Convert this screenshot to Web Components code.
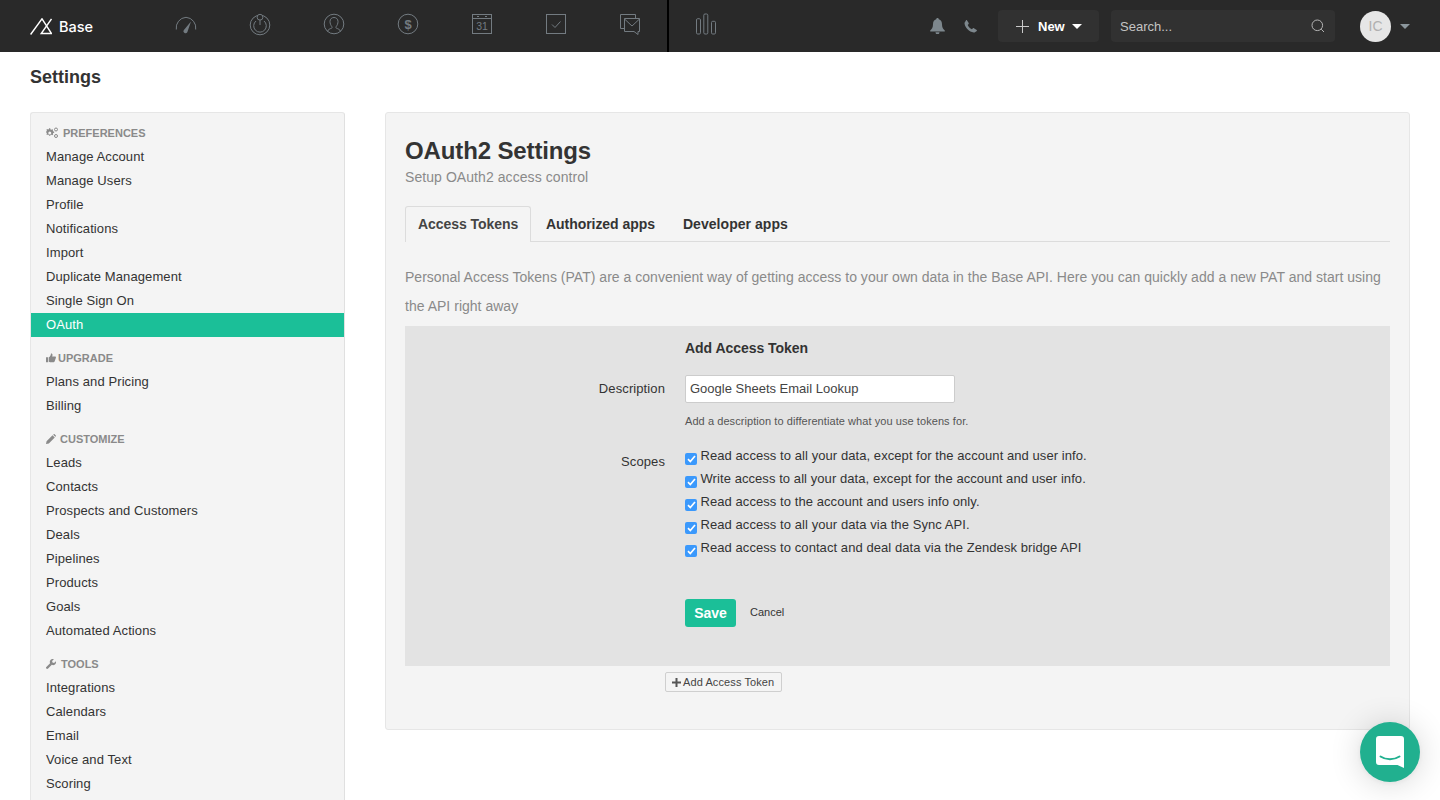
<!DOCTYPE html>
<html lang="en">
<head>
<meta charset="utf-8">
<title>Settings</title>
<style>
  html, body { margin: 0; height: 100%; overflow: hidden; background: #fff; }
  body { font-family: "Liberation Sans", Arial, sans-serif; color: #333; }
</style>
</head>
<body>
<app-shell>
  <top-bar slot="top"></top-bar>
  <side-nav slot="side">
    <nav-group label="Preferences" icon="gears">
      <nav-item>Manage Account</nav-item>
      <nav-item>Manage Users</nav-item>
      <nav-item>Profile</nav-item>
      <nav-item>Notifications</nav-item>
      <nav-item>Import</nav-item>
      <nav-item>Duplicate Management</nav-item>
      <nav-item>Single Sign On</nav-item>
      <nav-item active>OAuth</nav-item>
    </nav-group>
    <nav-group label="Upgrade" icon="thumb">
      <nav-item>Plans and Pricing</nav-item>
      <nav-item>Billing</nav-item>
    </nav-group>
    <nav-group label="Customize" icon="pencil">
      <nav-item>Leads</nav-item>
      <nav-item>Contacts</nav-item>
      <nav-item>Prospects and Customers</nav-item>
      <nav-item>Deals</nav-item>
      <nav-item>Pipelines</nav-item>
      <nav-item>Products</nav-item>
      <nav-item>Goals</nav-item>
      <nav-item>Automated Actions</nav-item>
    </nav-group>
    <nav-group label="Tools" icon="wrench">
      <nav-item>Integrations</nav-item>
      <nav-item>Calendars</nav-item>
      <nav-item>Email</nav-item>
      <nav-item>Voice and Text</nav-item>
      <nav-item>Scoring</nav-item>
    </nav-group>
  </side-nav>
  <oauth-panel>
    <token-form>
      <scope-check>Read access to all your data, except for the account and user info.</scope-check>
      <scope-check>Write access to all your data, except for the account and user info.</scope-check>
      <scope-check>Read access to the account and users info only.</scope-check>
      <scope-check>Read access to all your data via the Sync API.</scope-check>
      <scope-check>Read access to contact and deal data via the Zendesk bridge API</scope-check>
    </token-form>
  </oauth-panel>
</app-shell>
<chat-launcher></chat-launcher>

<script>
class AppShell extends HTMLElement {
  constructor() {
    super();
    this.attachShadow({ mode: 'open' });
    this.shadowRoot.innerHTML = `
      <style>
        :host { display: block; }
        h1 { margin: 0; padding: 0 30px; height: 60px; line-height: 50px; font-size: 18px; font-weight: 700; color: #333; }
        .cols { display: flex; align-items: flex-start; gap: 40px; padding: 0 30px; }
      </style>
      <slot name="top"></slot>
      <h1>Settings</h1>
      <div class="cols">
        <slot name="side"></slot>
        <slot></slot>
      </div>
    `;
  }
}
customElements.define('app-shell', AppShell);

const NAV_ICONS = {
  gauge: `<path d="M2.300 17.500A10.600 10.600 0 0 1 12 5.300 10.600 10.600 0 0 1 21.700 17.500"/><path d="M9.700 18.200 17 9.500l-3.700 10.700a1.900 1.900 0 0 1-3.600-2z" fill="currentColor" stroke="none"/>`,
  leads: `<circle cx="12" cy="13" r="9.800"/><path d="M8 9a6.300 6.300 0 1 0 8 0"/><circle cx="12" cy="5.200" r="2.900" fill="#292929"/><path d="M12 8.100V13"/>`,
  contact: `<circle cx="12" cy="12" r="9.800"/><path d="M5.500 19.500c.6-2.200 2.400-2.600 4.100-3.300.6-.3.7-1 .3-1.500C8.700 13.200 8 11.400 8 9.500 8 7 9.800 5.500 12 5.500S16 7 16 9.500c0 1.900-.7 3.700-1.900 5.200-.4.500-.3 1.200.3 1.500 1.700.7 3.500 1.100 4.100 3.300"/>`,
  dollar: `<circle cx="12" cy="12" r="9.800"/><text x="12" y="16.500" text-anchor="middle" font-size="13" font-weight="700" font-family="Liberation Sans, sans-serif" fill="currentColor" stroke="none">$</text>`,
  calendar: `<rect x="2.500" y="2.500" width="19" height="19"/><path d="M2.500 6.500h19"/><path d="M7 4.500h2M15 4.500h2"/><text x="12" y="18" text-anchor="middle" font-size="10.500" font-family="Liberation Sans, sans-serif" fill="currentColor" stroke="none">31</text>`,
  task: `<rect x="2.500" y="2.500" width="19" height="19"/><path d="M8 12.500l3 3 5.500-6"/>`,
  mail: `<path d="M6.500 16.500H2.500V2.500h15v4"/><path d="M6.500 6.500h15v13h-1.500v3l-4-3H6.500z" fill="#292929"/><path d="M6.500 7l7.500 7 7.500-7"/>`,
  chart: `<rect x="2.500" y="6.700" width="4" height="15.300" rx="1.200"/><rect x="9.800" y="2" width="4" height="20" rx="1.200"/><rect x="17.500" y="9.300" width="4" height="12.700" rx="1.200"/>`
};

class NavIcon extends HTMLElement {
  constructor() {
    super();
    this.attachShadow({ mode: 'open' });
  }
  connectedCallback() {
    this.shadowRoot.innerHTML = `
      <style>
        :host { display: flex; align-items: center; justify-content: center; box-sizing: border-box; width: 74px; height: 52px; padding-bottom: 4px; color: #737b81; }
        svg { display: block; width: 24px; height: 24px; }
      </style>
      <svg viewBox="0 0 24 24" fill="none" stroke="currentColor" stroke-width="1">${NAV_ICONS[this.getAttribute('name')]}</svg>
    `;
  }
}
customElements.define('nav-icon', NavIcon);

class TopBar extends HTMLElement {
  constructor() {
    super();
    this.attachShadow({ mode: 'open' });
    this.shadowRoot.innerHTML = `
      <style>
        :host { display: flex; align-items: center; height: 52px; background: #292929; color: #fff; }
        .logo { display: flex; align-items: center; gap: 7px; width: 119px; padding-left: 30px; font: 500 14.500px Inter, "Liberation Sans", sans-serif; }
        .logo svg { display: block; }
        .icons { display: flex; border-right: 2px solid #000; }
        .right { display: flex; align-items: center; margin-left: auto; padding-right: 30px; }
        .glyph { display: block; color: #7d878d; }
        .bell { margin-right: 19px; }
        .phone { margin-right: 21px; }
        .new { display: flex; align-items: center; box-sizing: border-box; width: 101px; height: 32px; padding-left: 18px; background: #313131; border-radius: 4px; font-size: 13px; font-weight: 700; margin-right: 12px; }
        .new svg { margin-right: 9px; }
        .new i, .caret { display: block; width: 0; height: 0; border-left: 5px solid transparent; border-right: 5px solid transparent; border-top: 5px solid #fff; margin-left: 7px; }
        .search { display: flex; align-items: center; justify-content: space-between; box-sizing: border-box; width: 224px; height: 32px; padding: 0 10px 0 9px; background: #313131; border-radius: 4px; font-size: 13px; color: #c4c4c4; margin-right: 25px; }
        .avatar { display: flex; align-items: center; justify-content: center; width: 31px; height: 31px; border-radius: 50%; background: #e6e6e6; color: #b0b0b0; font-size: 14px; }
        .caret { border-top-color: #8b969c; margin-left: 9px; }
      </style>
      <div class="logo">
        <svg width="22" height="17" viewBox="0 0 22 17" fill="none" stroke="#fff" stroke-width="1.400">
          <path d="M.6 16.500 12 .8 21.500 15.500H11.200L21.500 1"/>
        </svg>
        <span>Base</span>
      </div>
      <div class="icons">
        <nav-icon name="gauge"></nav-icon>
        <nav-icon name="leads"></nav-icon>
        <nav-icon name="contact"></nav-icon>
        <nav-icon name="dollar"></nav-icon>
        <nav-icon name="calendar"></nav-icon>
        <nav-icon name="task"></nav-icon>
        <nav-icon name="mail"></nav-icon>
      </div>
      <nav-icon name="chart"></nav-icon>
      <div class="right">
        <svg class="glyph bell" width="15" height="16" viewBox="0 0 15 16" fill="currentColor"><path d="M7.500 0C8.300 0 8.800.6 8.800 1.300 11 2 12 3.900 12 6.200c0 3 1 4.800 2.800 6.300v1H.2v-1C2 11 3 9.200 3 6.200 3 3.900 4 2 6.200 1.300 6.200.6 6.700 0 7.500 0zM5.500 14.300h4a2 2 0 0 1-4 0z"/></svg>
        <svg class="glyph phone" width="13" height="13" viewBox="0 0 13 13" fill="currentColor"><path d="M2.900.2 4.700 3c.2.300.1.700-.1 1L3.700 5c.7 1.700 2.300 3.300 4.200 4.200l1-.9c.3-.2.700-.3 1-.1l2.800 1.800c.3.200.3.600.1.900C11.700 11.200 10.900 12.500 9.700 12.500 5.200 12 1 7.800.5 3.300.5 2.100 1.800 1.300 2 .2c.3-.2.700-.2.900 0z"/></svg>
        <div class="new">
          <svg width="13" height="13" viewBox="0 0 13 13" stroke="#c9c9c9" stroke-width="1"><path d="M6.500 0v13M0 6.500h13"/></svg>
          <span>New</span><i></i>
        </div>
        <div class="search">
          <span>Search...</span>
          <svg width="14" height="14" viewBox="0 0 14 14" fill="none" stroke="#b4b4b4" stroke-width="1"><circle cx="6.300" cy="6.300" r="5.300"/><path d="M10.200 10.200 13 13"/></svg>
        </div>
        <div class="avatar">IC</div>
        <i class="caret"></i>
      </div>
    `;
  }
}
customElements.define('top-bar', TopBar);

class SideNav extends HTMLElement {
  constructor() {
    super();
    this.attachShadow({ mode: 'open' });
    this.shadowRoot.innerHTML = `
      <style>
        :host { display: block; flex: none; box-sizing: border-box; width: 315px; padding: 8px 0 40px; background: #f4f4f4; border: 1px solid #e6e6e6; border-right-color: #e0e0e0; border-radius: 3px 3px 0 0; }
      </style>
      <slot></slot>
    `;
  }
}
customElements.define('side-nav', SideNav);

// width is the drawn size of the icon, gap the space before the label
const GROUP_ICONS = {
  gears: { width: 13, gap: 4, d: `<path fill-rule="evenodd" d="M4.500 2.500l1 .3.700-.6.900.6-.3.900.5.800.9.100v1.100l-.9.200-.4.800.3.900-.9.700-.7-.6-1 .2-.4.900H3.100l-.3-.9-.9-.3-.8.500-.7-.8.500-.8-.3-.9-.9-.2V4.600l.9-.2.300-.8-.5-.8.800-.8.800.5.800-.3.300-.9h1.100zM3.800 4.500a1.500 1.500 0 1 0 0 3 1.500 1.500 0 0 0 0-3z"/><circle cx="10" cy="2.500" r="1.500" fill="none" stroke="currentColor" stroke-width="1"/><circle cx="10" cy="9" r="1.500" fill="none" stroke="currentColor" stroke-width="1"/>` },
  thumb: { width: 10, gap: 2, d: `<path d="M0 5h2.600v6H0zM3.400 5.200C5 4.300 5.800 2.600 6 .5c1.300-.2 2 .8 1.800 2.200L7.400 4.300h3.400c.9 0 1.400.9 1 1.600L10.300 10.300c-.3.500-.7.700-1.200.7H5c-.6 0-1.100-.2-1.600-.5z"/>` },
  pencil: { width: 10, gap: 4, d: `<path d="M0 12l.7-3.400L7.800 1.500l2.700 2.700-7.100 7.100zM8.600.8l.7-.6c.3-.3.700-.3 1 0l1.500 1.500c.3.300.3.700 0 1l-.6.700z"/>` },
  wrench: { width: 10, gap: 5, d: `<path d="M11.800 2.600 9.700 4.700 7.800 4.200 7.300 2.300 9.400.2C7.700-.4 5.800.1 5 1.700c-.6 1-.6 2.300-.1 3.300L.4 9.500c-.6.600-.6 1.400 0 2s1.500.6 2.100 0L7 7c1.100.5 2.300.5 3.300-.1 1.500-.9 2-2.600 1.500-4.300z"/>` }
};

class NavGroup extends HTMLElement {
  constructor() {
    super();
    this.attachShadow({ mode: 'open' });
  }
  connectedCallback() {
    const icon = GROUP_ICONS[this.getAttribute('icon')];
    const isGears = icon.width === 13;
    this.shadowRoot.innerHTML = `
      <style>
        :host { display: block; margin-bottom: 9px; }
        .head { display: flex; align-items: center; gap: ${icon.gap}px; height: 24px; padding-left: 15px; font-size: 11px; font-weight: 700; text-transform: uppercase; color: #8a8a8a; }
        svg { display: block; flex: none; fill: #8a8a8a; color: #8a8a8a; }
      </style>
      <div class="head">
        <svg width="${icon.width}" height="${isGears ? 12 : icon.width}" viewBox="0 0 ${isGears ? '13 12' : '12 12'}">${icon.d}</svg>
        <span>${this.getAttribute('label')}</span>
      </div>
      <slot></slot>
    `;
  }
}
customElements.define('nav-group', NavGroup);

class NavItem extends HTMLElement {
  constructor() {
    super();
    this.attachShadow({ mode: 'open' });
    this.shadowRoot.innerHTML = `
      <style>
        :host { display: block; height: 24px; line-height: 24px; padding-left: 15px; font-size: 13px; letter-spacing: .1px; color: #333; }
        :host([active]) { background: #1bbf98; color: #fff; }
      </style>
      <slot></slot>
    `;
  }
}
customElements.define('nav-item', NavItem);

class OauthPanel extends HTMLElement {
  constructor() {
    super();
    this.attachShadow({ mode: 'open' });
    this.shadowRoot.innerHTML = `
      <style>
        :host { display: block; flex: 1; box-sizing: border-box; height: 618px; padding: 19px 19px 0; background: #f4f4f4; border: 1px solid #e6e6e6; border-radius: 3px; }
        h2 { margin: 0; font-size: 24px; line-height: 38px; font-weight: 700; letter-spacing: -.13px; color: #333; }
        .sub { margin: 0; font-size: 14px; line-height: 14px; letter-spacing: .07px; color: #8a8a8a; }
        .tabs { display: flex; box-sizing: border-box; height: 36px; margin-top: 22px; border-bottom: 1px solid #dcdcdc; font-size: 14px; font-weight: 700; letter-spacing: -.05px; color: #333; white-space: nowrap; }
        .tab { padding: 0 14px 0 13px; line-height: 37px; }
        .tab.on { height: 36px; width: 126px; padding: 0 12px; line-height: 35px; background: #f4f4f4; border: 1px solid #dcdcdc; border-bottom: 0; border-radius: 3px 3px 0 0; box-sizing: border-box; color: #444; }
        .intro { margin: 21px 0 5px; font-size: 14px; line-height: 29px; letter-spacing: .02px; color: #8a8a8a; }
        .add { display: flex; align-items: center; gap: 2px; box-sizing: border-box; width: 117px; height: 20px; margin: 6px 0 0 260px; padding-left: 6px; background: #f4f4f4; border: 1px solid #cfcfcf; border-radius: 2px; font-size: 11px; letter-spacing: .1px; color: #444; }
        .add svg { display: block; }
      </style>
      <h2>OAuth2 Settings</h2>
      <p class="sub">Setup OAuth2 access control</p>
      <div class="tabs">
        <div class="tab on">Access Tokens</div>
        <div class="tab" style="margin-left:2px">Authorized apps</div>
        <div class="tab" style="margin-left:1px;letter-spacing:.05px">Developer apps</div>
      </div>
      <p class="intro">Personal Access Tokens (PAT) are a convenient way of getting access to your own data in the Base API. Here you can quickly add a new PAT and start using the API right away</p>
      <slot></slot>
      <div class="add">
        <svg width="9" height="9" viewBox="0 0 9 9" fill="#555"><path d="M3.500 0h2v3.500H9v2H5.500V9h-2V5.500H0v-2h3.500z"/></svg>
        <span>Add Access Token</span>
      </div>
    `;
  }
}
customElements.define('oauth-panel', OauthPanel);

class TokenForm extends HTMLElement {
  constructor() {
    super();
    this.attachShadow({ mode: 'open' });
    this.shadowRoot.innerHTML = `
      <style>
        :host { display: block; box-sizing: border-box; height: 340px; padding-top: 11px; background: #e3e3e3; font-size: 13px; color: #333; }
        .row { display: grid; grid-template-columns: 260px 1fr; column-gap: 20px; }
        .label { text-align: right; letter-spacing: .1px; }
        h3 { margin: 0 0 16px; font-size: 14px; line-height: 22px; font-weight: 700; letter-spacing: -.05px; }
        .field { box-sizing: border-box; width: 270px; height: 28px; padding: 0 4px; line-height: 26px; background: #fff; border: 1px solid #ccc; border-radius: 2px; color: #444; }
        .desc { line-height: 28px; }
        .help { margin: 12px 0 17px; font-size: 11px; line-height: 12px; letter-spacing: .07px; color: #555; }
        .scopes-label { padding-top: 9px; line-height: 18px; }
        .scopes { display: grid; margin-top: 3px; }
        .actions { display: flex; align-items: center; gap: 14px; margin-top: 37px; }
        .save { display: flex; align-items: center; justify-content: center; width: 51px; height: 28px; background: #1bbf98; border-radius: 3px; color: #fff; font-size: 14px; font-weight: 700; }
        .cancel { padding-bottom: 2px; font-size: 11px; color: #333; }
      </style>
      <div class="row"><div></div><h3>Add Access Token</h3></div>
      <div class="row">
        <div class="label desc">Description</div>
        <div><div class="field">Google Sheets Email Lookup</div><p class="help">Add a description to differentiate what you use tokens for.</p></div>
      </div>
      <div class="row">
        <div class="label scopes-label">Scopes</div>
        <div>
          <div class="scopes"><slot></slot></div>
          <div class="actions"><div class="save">Save</div><div class="cancel">Cancel</div></div>
        </div>
      </div>
    `;
  }
}
customElements.define('token-form', TokenForm);

class ScopeCheck extends HTMLElement {
  constructor() {
    super();
    this.attachShadow({ mode: 'open' });
    this.shadowRoot.innerHTML = `
      <style>
        :host { display: flex; height: 23px; line-height: 18px; font-size: 13px; letter-spacing: .07px; color: #333; }
        .box { flex: none; display: flex; align-items: center; justify-content: center; width: 12px; height: 12px; margin: 6px 3.500px 0 0; background: #3b99fc; border-radius: 2px; }
        svg { display: block; }
      </style>
      <span class="box"><svg width="9" height="8" viewBox="0 0 9 8" fill="none" stroke="#fff" stroke-width="1.700"><path d="M1 4.200 3.300 6.500 8 1"/></svg></span>
      <span><slot></slot></span>
    `;
  }
}
customElements.define('scope-check', ScopeCheck);

class ChatLauncher extends HTMLElement {
  constructor() {
    super();
    this.attachShadow({ mode: 'open' });
    this.shadowRoot.innerHTML = `
      <style>
        :host { position: fixed; right: 20px; bottom: 18px; display: flex; align-items: center; justify-content: center; width: 60px; height: 60px; border-radius: 50%; background: #21b08f; box-shadow: 0 1px 6px rgba(0,0,0,.06), 0 2px 32px rgba(0,0,0,.16); }
        svg { display: block; }
      </style>
      <svg width="28" height="32" viewBox="0 0 28 32">
        <path d="M3 0h22a3 3 0 0 1 3 3v29l-6.500-3H3a3 3 0 0 1-3-3V3a3 3 0 0 1 3-3z" fill="#fff"/>
        <path d="M4.500 20.500c5.500 3.600 13.500 3.600 19 0" fill="none" stroke="#21b08f" stroke-width="2" stroke-linecap="round"/>
      </svg>
    `;
  }
}
customElements.define('chat-launcher', ChatLauncher);
</script>
</body>
</html>
